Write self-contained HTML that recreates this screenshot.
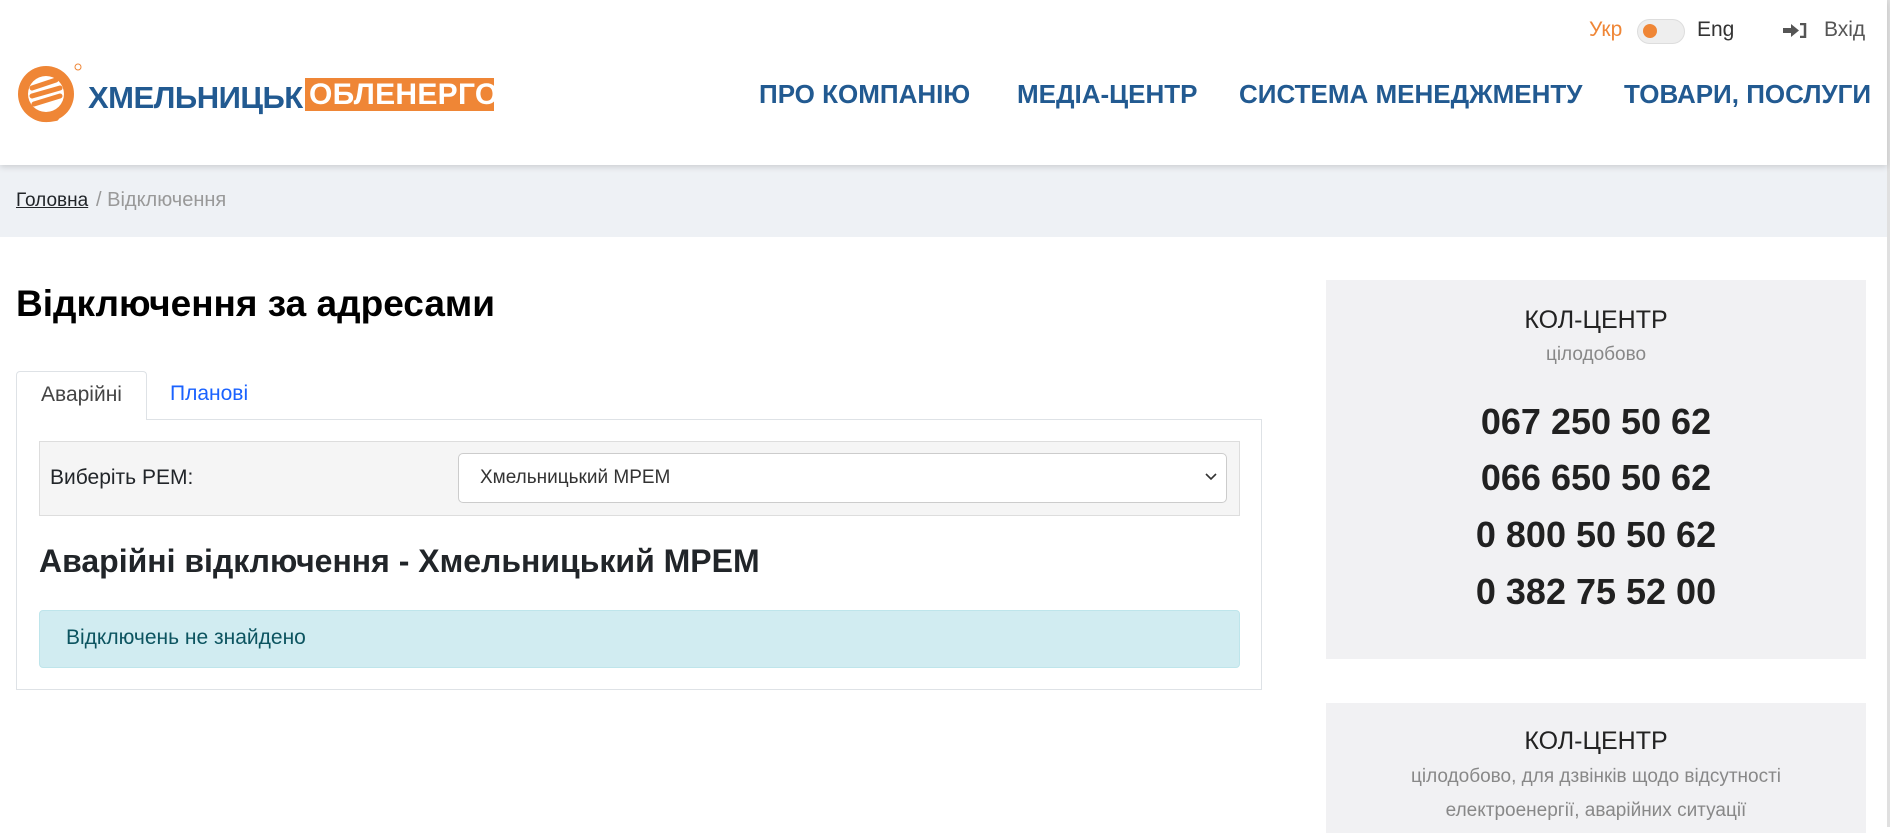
<!DOCTYPE html>
<html><head><meta charset="utf-8">
<style>
*{box-sizing:border-box;margin:0;padding:0}
body{width:1890px;height:827px;overflow:hidden;background:#fff;font-family:"Liberation Sans",sans-serif;color:#212529;position:relative}
.a{position:absolute;white-space:nowrap}
.nav{font-weight:bold;color:#225a91;font-size:26px;top:79px}
.hdr{position:absolute;left:0;top:0;width:1887px;height:165px;background:#fff;box-shadow:0 2px 6px rgba(0,0,0,.15);z-index:2}
.bc{position:absolute;left:0;top:165px;width:1887px;height:72px;background:#eef1f5}
.box{position:absolute;left:1326px;width:540px;background:#f1f1f3;text-align:center}
.ph{font-weight:bold;font-size:36px;color:#212121;position:absolute;left:0;width:100%}
</style></head><body>
<div class="hdr">
 <svg class="a" style="left:16px;top:62px" width="66" height="64" viewBox="0 0 66 64">
  <circle cx="30" cy="32" r="28" fill="#ef8636"/>
  <circle cx="30" cy="32" r="18" fill="#fff"/>
  <path d="M16 26 L40 18 M16 34 L44 26 M18 42 L44 34" stroke="#ef8636" stroke-width="5" stroke-linecap="round" fill="none"/>
  <path d="M14 50 Q22 60 40 56" stroke="#ef8636" stroke-width="6" fill="none" stroke-linecap="round"/>
  <circle cx="62" cy="5" r="3" fill="none" stroke="#ef8636" stroke-width="1"/>
 </svg>
 <div class="a" style="left:88px;top:80px;font-size:31px;font-weight:bold;color:#225a91;letter-spacing:-0.5px">ХМЕЛЬНИЦЬК</div>
 <div class="a" style="left:305px;top:78px;width:189px;height:33px;background:#ef8636;color:#fff;font-size:30px;font-weight:bold;line-height:33px;padding-left:4px;letter-spacing:0.3px">ОБЛЕНЕРГО</div>

 <div class="a" style="left:1589px;top:18px;font-size:21px;color:#ef8636">Укр</div>
 <div class="a" style="left:1637px;top:19px;width:48px;height:25px;border-radius:13px;background:#eee;border:1px solid #ddd"></div>
 <div class="a" style="left:1643px;top:24px;width:14px;height:14px;border-radius:50%;background:#ef8636"></div>
 <div class="a" style="left:1697px;top:18px;font-size:21px;color:#333">Eng</div>
 <svg class="a" style="left:1783px;top:23px" width="25" height="15" viewBox="0 0 25 15"><path d="M0 5h8V1l8 6.5-8 6.5V10H0z" fill="#555"/><path d="M17 1h5v13h-5" stroke="#555" stroke-width="2.5" fill="none"/></svg>
 <div class="a" style="left:1824px;top:18px;font-size:21px;color:#555">Вхід</div>

 <div class="a nav" style="left:759px">ПРО КОМПАНІЮ</div>
 <div class="a nav" style="left:1017px">МЕДІА-ЦЕНТР</div>
 <div class="a nav" style="left:1239px">СИСТЕМА МЕНЕДЖМЕНТУ</div>
 <div class="a nav" style="left:1624px">ТОВАРИ, ПОСЛУГИ</div>
</div>
<div style="position:absolute;right:0;top:0;width:3px;height:827px;background:#e0e0e0"></div>
<div class="bc">
 <div class="a" style="left:16px;top:25px;font-size:19px;color:#212529;text-decoration:underline">Головна</div>
 <div class="a" style="left:96px;top:24px;font-size:20px;color:#999">/ Відключення</div>
</div>

<div class="a" style="left:16px;top:283px;font-size:37px;font-weight:bold;color:#000">Відключення за адресами</div>

<div class="a" style="left:16px;top:371px;width:131px;height:49px;border:1px solid #dee2e6;border-bottom:none;border-radius:4px 4px 0 0;background:#fff;z-index:1;font-size:21px;color:#444;text-align:center;line-height:46px">Аварійні</div>
<div class="a" style="left:170px;top:382px;font-size:21px;color:#1a62ff">Планові</div>
<div class="a" style="left:16px;top:419px;width:1246px;height:271px;border:1px solid #dee2e6"></div>

<div class="a" style="left:39px;top:441px;width:1201px;height:75px;background:#f5f5f5;border:1px solid #ddd"></div>
<div class="a" style="left:50px;top:466px;font-size:21px;color:#212529">Виберіть РЕМ:</div>
<div class="a" style="left:458px;top:453px;width:769px;height:50px;background:#fff;border:1px solid #ccc;border-radius:5px"></div>
<div class="a" style="left:480px;top:467px;font-size:19px;color:#333">Хмельницький МРЕМ</div>
<svg class="a" style="left:1205px;top:473px" width="12" height="8" viewBox="0 0 12 8"><path d="M1 1l5 5 5-5" stroke="#333" stroke-width="1.6" fill="none"/></svg>

<div class="a" style="left:39px;top:543px;font-size:32px;font-weight:bold;color:#212529">Аварійні відключення - Хмельницький МРЕМ</div>

<div class="a" style="left:39px;top:610px;width:1201px;height:58px;background:#d1ecf1;border:1px solid #bee5eb;border-radius:4px"></div>
<div class="a" style="left:66px;top:626px;font-size:21px;color:#0c5460">Відключень не знайдено</div>

<div class="box" style="top:280px;height:379px">
 <div class="a" style="left:0;width:100%;top:26px;font-size:25px;color:#222">КОЛ-ЦЕНТР</div>
 <div class="a" style="left:0;width:100%;top:64px;font-size:19px;color:#888">цілодобово</div>
 <div class="ph" style="top:121px">067 250 50 62</div>
 <div class="ph" style="top:177px">066 650 50 62</div>
 <div class="ph" style="top:234px">0 800 50 50 62</div>
 <div class="ph" style="top:291px">0 382 75 52 00</div>
</div>
<div class="box" style="top:703px;height:130px">
 <div class="a" style="left:0;width:100%;top:24px;font-size:25px;color:#222">КОЛ-ЦЕНТР</div>
 <div class="a" style="left:0;width:100%;top:63px;font-size:19px;color:#888">цілодобово, для дзвінків щодо відсутності</div>
 <div class="a" style="left:0;width:100%;top:97px;font-size:19px;color:#888">електроенергії, аварійних ситуації</div>
</div>
</body></html>
